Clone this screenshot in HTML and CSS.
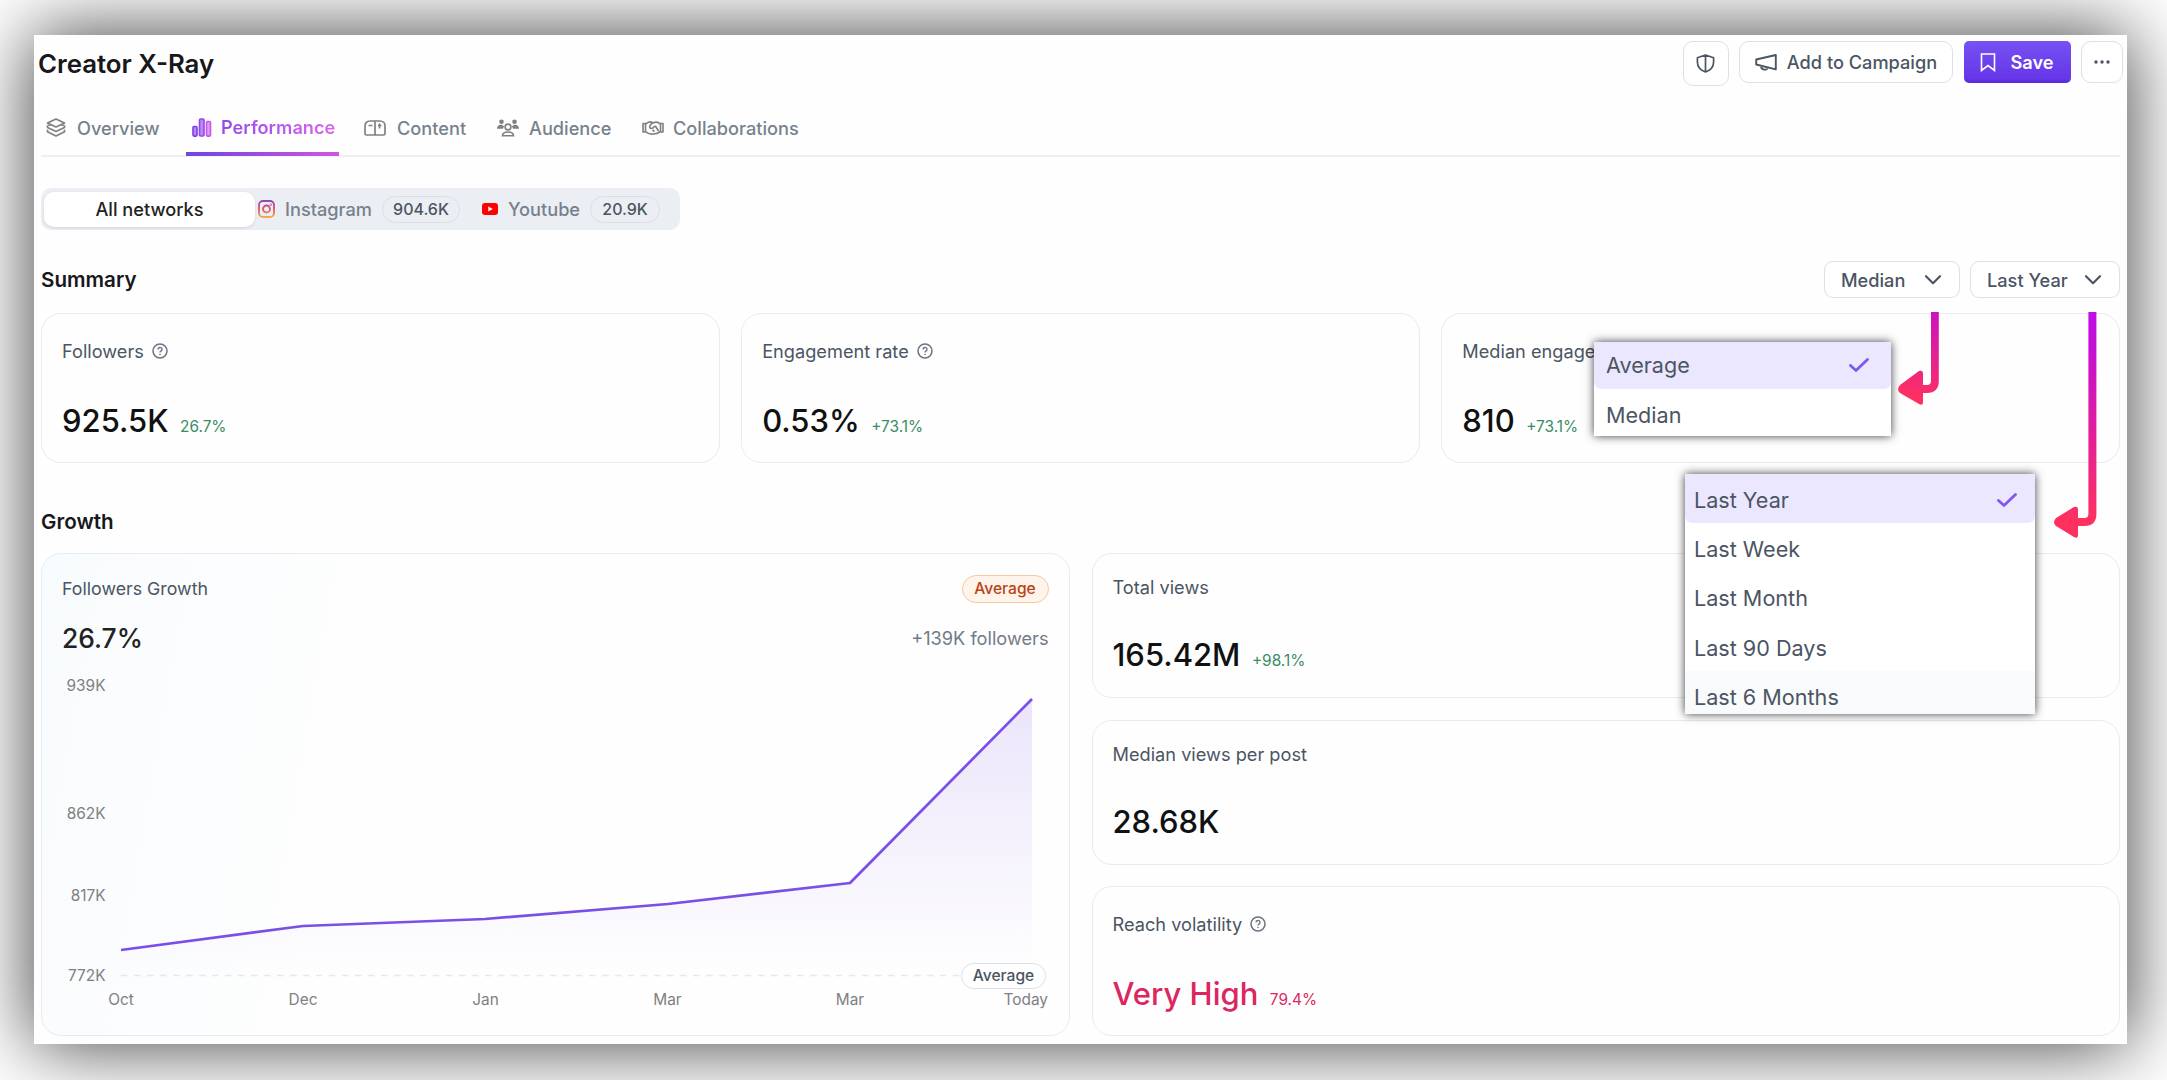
FILE: index.html
```html
<!DOCTYPE html>
<html lang="en">
<head>
  <meta charset="utf-8">
  <title>Creator X-Ray</title>
  <link rel="stylesheet" href="styles.css">
</head>
<body>

  <svg class="defs" width="0" height="0">
    <defs>
      <symbol id="help" viewBox="0 0 16 16">
        <circle cx="8" cy="8" r="7" fill="none" stroke="currentColor" stroke-width="1.5"/>
        <path d="M6 6.4a2 2 0 1 1 2.9 1.8c-.6.3-.9.6-.9 1.2" fill="none" stroke="currentColor" stroke-width="1.4"/>
        <circle cx="8" cy="11.5" r=".8" fill="currentColor"/>
      </symbol>
      <symbol id="chevron" viewBox="0 0 16 10">
        <path d="M1 1.2l7 7 7-7" fill="none" stroke="currentColor" stroke-width="2.2" stroke-linecap="round" stroke-linejoin="round"/>
      </symbol>
      <symbol id="check" viewBox="0 0 20 14">
        <path d="M1.500 7.500l5.500 5L18.500 1.500" fill="none" stroke="currentColor" stroke-width="2.800" stroke-linecap="round" stroke-linejoin="round"/>
      </symbol>
    </defs>
  </svg>

  <main class="panel">
    <header class="header">
      <h1>Creator X-Ray</h1>
      <div class="actions">
        <button class="btn shield">
          <svg width="19" height="19" viewBox="0 0 19 19" fill="none" stroke="currentColor" stroke-width="1.7" stroke-linejoin="round"><path d="M9.5 1L17.6 3.8V8c0 4.600-3.200 8.200-8.100 10C4.600 16.200 1.400 12.600 1.400 8V3.800zM9.500 1v17"/></svg>
        </button>
        <button class="btn campaign">
          <svg width="22" height="17" viewBox="0 0 22 17" fill="none" stroke="currentColor" stroke-width="1.9" stroke-linejoin="round"><path d="M1.200 5.500L20.800 1v14.400L1.200 10.500zM6 12c0 4 6 5 6.500 1.500"/></svg>
          Add to Campaign
        </button>
        <button class="btn save">
          <svg width="16" height="19" viewBox="0 0 16 19" fill="none" stroke="currentColor" stroke-width="1.600"><path d="M1.500 1h13v16.500L8 12.500l-6.500 5z"/></svg>
          Save
        </button>
        <button class="btn more">
          <svg width="16" height="4" viewBox="0 0 16 4" fill="currentColor"><circle cx="2" cy="2" r="1.700"/><circle cx="8" cy="2" r="1.700"/><circle cx="14" cy="2" r="1.700"/></svg>
        </button>
      </div>
    </header>

    <nav class="tabs">
      <a class="tab overview">
        <svg width="20" height="19" viewBox="0 0 20 19" fill="none" stroke="currentColor" stroke-width="1.700" stroke-linejoin="round"><path d="M10 1l8.500 4L10 9 1.500 5zM1.500 7.500v2L10 13.500l8.500-4v-2M1.500 11.800v2L10 18l8.500-4.200v-2M1.500 7.500L5 6.600M18.500 7.500L15 6.600"/></svg>
        <span>Overview</span>
      </a>
      <a class="tab performance active">
        <svg width="20" height="19" viewBox="0 0 20 19" stroke-width="1.600"><g fill="#b58af5" stroke="#7c3fe8"><rect x="1" y="8.500" width="4" height="9.600" rx="1"/><rect x="7.500" y="1" width="4.500" height="17" rx="1" stroke="#9a45ea"/><rect x="14.500" y="3.500" width="4" height="14.600" rx="1" fill="#e49af5" stroke="#c458ee"/></g></svg>
        <span>Performance</span>
      </a>
      <a class="tab content">
        <svg width="22" height="16" viewBox="0 0 22 16" fill="none" stroke="currentColor" stroke-width="1.700" stroke-linejoin="round"><path d="M6 1h10c3 0 5 2.200 5 5v7.500a1.500 1.500 0 0 1-1.500 1.500h-17A1.500 1.500 0 0 1 1 13.500V6c0-2.800 2-5 5-5zM11 1v14M4.500 5.500h4M14 5.500h3.500M15.500 3.500v5"/></svg>
        <span>Content</span>
      </a>
      <a class="tab audience">
        <svg width="22" height="18" viewBox="0 0 22 18" fill="currentColor"><circle cx="4.500" cy="2.800" r="2.300"/><circle cx="17.500" cy="2.800" r="2.300"/><path d="M0 9.800c0-5 5.500-4.800 7-2.500L6 9.800zM22 9.800c0-5-5.500-4.800-7-2.500l1 2.500z"/><g fill="none" stroke="currentColor" stroke-width="1.600"><circle cx="11" cy="8" r="2.900"/><path d="M5.500 16.800c0-5 11-5 11 0z"/></g></svg>
        <span>Audience</span>
      </a>
      <a class="tab collab">
        <svg width="22" height="14" viewBox="0 0 22 14" fill="none" stroke="currentColor" stroke-width="1.600" stroke-linejoin="round"><path d="M1 2.500h2.500v8.500H1zM21 2.500h-2.500v8.500H21zM3.500 3.500c2.500-3 5.500-3 7.500-1.500 3-1.500 5.500-1 7.500 1.200M11 2C7.500 3 6.500 7.500 9.500 7.500c2 0 2-2.200 4-2.200L16.500 10M3.500 10.500c2 2 5 3 8 2.500 3 0 5-1 7-2.500M12.500 10.500L10.500 9"/></svg>
        <span>Collaborations</span>
      </a>
    </nav>

    <div class="networks">
      <div class="network all">All networks</div>
      <div class="network instagram">
        <svg width="17" height="18" viewBox="0 0 17 18" fill="none" stroke="url(#ig)" stroke-width="1.800">
          <defs><linearGradient id="ig" x1="0" y1="0" x2="0" y2="18" gradientUnits="userSpaceOnUse"><stop offset="0" stop-color="#8a45b8"/><stop offset=".5" stop-color="#e0506b"/><stop offset="1" stop-color="#f9b24e"/></linearGradient></defs>
          <rect x="1" y="1" width="15" height="16" rx="4"/><circle cx="8.500" cy="9" r="3.500"/><circle cx="12.700" cy="4.700" r=".3"/>
        </svg>
        <span>Instagram</span>
        <b class="count">904.6K</b>
      </div>
      <div class="network youtube">
        <svg width="16" height="12" viewBox="0 0 16 12"><rect width="16" height="12" rx="3" fill="#f00"/><path d="M6.300 3.500l4.500 2.500-4.500 2.500z" fill="#fff"/></svg>
        <span>Youtube</span>
        <b class="count">20.9K</b>
      </div>
    </div>

    <div class="section-head">
      <h2>Summary</h2>
      <div class="filters">
        <div class="select median"><span>Median</span><svg width="16" height="10"><use href="#chevron"/></svg></div>
        <div class="select year"><span>Last Year</span><svg width="16" height="10"><use href="#chevron"/></svg></div>
      </div>
    </div>

    <section class="summary">
      <div class="card">
        <div class="label">Followers <svg class="help"><use href="#help"/></svg></div>
        <div class="value"><strong>925.5K</strong><small>26.7%</small></div>
      </div>
      <div class="card">
        <div class="label">Engagement rate <svg class="help"><use href="#help"/></svg></div>
        <div class="value"><strong>0.53%</strong><small>+73.1%</small></div>
      </div>
      <div class="card">
        <div class="label">Median engage</div>
        <div class="value"><strong>810</strong><small>+73.1%</small></div>
      </div>
    </section>

    <h2 class="growth-title">Growth</h2>

    <section class="growth">
      <div class="card growth-card">
        <div class="row">
          <span class="name">Followers Growth</span>
          <span class="tag">Average</span>
        </div>
        <div class="row second">
          <strong class="percent">26.7%</strong>
          <span class="delta">+139K followers</span>
        </div>
        <div class="chart">
          <svg width="1000" height="350" viewBox="55 670 1000 350">
            <defs>
              <linearGradient id="area" x1="0" y1="699" x2="0" y2="975" gradientUnits="userSpaceOnUse">
                <stop offset="0" stop-color="#7847e8" stop-opacity=".14"/>
                <stop offset="1" stop-color="#7847e8" stop-opacity="0"/>
              </linearGradient>
            </defs>
            <path d="M121 950L303 926L485 919L668 904L850 883L1032 699V975H121z" fill="url(#area)"/>
            <path d="M121 975.500H962" stroke="#e6e8eb" stroke-width="1.500" stroke-dasharray="6.500 6.500"/>
            <path d="M121 950L303 926L485 919L668 904L850 883L1032 699" fill="none" stroke="#7a4fe6" stroke-width="2.700" stroke-linejoin="round"/>
            <g class="axis" text-anchor="end">
              <text x="105.500" y="691">939K</text>
              <text x="105.500" y="818.500">862K</text>
              <text x="105.500" y="900.500">817K</text>
              <text x="105.500" y="981">772K</text>
              <text x="1048" y="1004.500">Today</text>
            </g>
            <g class="axis" text-anchor="middle">
              <text x="121" y="1004.500">Oct</text>
              <text x="303" y="1004.500">Dec</text>
              <text x="485.500" y="1004.500">Jan</text>
              <text x="667.500" y="1004.500">Mar</text>
              <text x="850" y="1004.500">Mar</text>
            </g>
          </svg>
          <span class="marker">Average</span>
        </div>
      </div>

      <div class="card">
        <div class="label">Total views</div>
        <div class="value"><strong>165.42M</strong><small>+98.1%</small></div>
      </div>
      <div class="card">
        <div class="label">Median views per post</div>
        <div class="value"><strong>28.68K</strong></div>
      </div>
      <div class="card volatility">
        <div class="label">Reach volatility <svg class="help"><use href="#help"/></svg></div>
        <div class="value danger"><strong>Very High</strong><small>79.4%</small></div>
      </div>
    </section>
  </main>

  <!-- open menus -->
  <ul class="menu menu-median">
    <li class="selected">Average <svg width="20" height="14"><use href="#check"/></svg></li>
    <li>Median</li>
  </ul>
  <ul class="menu menu-year">
    <li class="selected">Last Year <svg width="20" height="14"><use href="#check"/></svg></li>
    <li>Last Week</li>
    <li>Last Month</li>
    <li>Last 90 Days</li>
    <li class="hover">Last 6 Months</li>
  </ul>

  <svg class="arrows" width="210" height="236" viewBox="1893 308 210 236">
    <defs>
      <linearGradient id="a1" x1="1939" y1="312" x2="1915" y2="400" gradientUnits="userSpaceOnUse"><stop offset="0" stop-color="#cb12bf"/><stop offset="1" stop-color="#ff3060"/></linearGradient>
      <linearGradient id="a2" x1="0" y1="312" x2="0" y2="520" gradientUnits="userSpaceOnUse"><stop offset="0" stop-color="#bf0de6"/><stop offset=".2" stop-color="#c60fd0"/><stop offset="1" stop-color="#ff3060"/></linearGradient>
    </defs>
    <path d="M1931 312h7.800v69q0 12-12 12H1923v8.500q0 5-4 2.500L1900 393q-4-3.500 0-8l19-14q4-1.500 4 3v11h4q4 0 4-4z" fill="url(#a1)"/>
    <path d="M2088.400 312h8v202q0 12-12 12H2078v8.500q0 5-4 2.500L2056 526q-4-3.500 0-8l18-11q4-1.500 4 3v8h6.400q4 0 4-4z" fill="url(#a2)"/>
  </svg>

</body>
</html>
```
FILE: styles.css
```css
* {
  box-sizing: border-box;
}
body {
  margin: 0;
  width: 2167px;
  height: 1080px;
  padding: 35px 40px 36px 34px;
  overflow: hidden;
  background: #fff;
  color: #4b5563;
  font-family: Inter, "Liberation Sans", sans-serif;
  font-size: 18.2px;
}
h1, h2, ul {
  margin: 0;
  padding: 0;
}
.defs {
  position: absolute;
}
.panel {
  height: 1009px;
  background: #fefefe;
  border: 1px solid #fff;
  box-shadow: 0 0 72px 2px rgba(0, 0, 0, .74);
}

/* header */
.header {
  display: flex;
  justify-content: space-between;
  height: 56px;
  padding: 5px 3px 0 3px;
}
h1 {
  font-size: 25.8px;
  font-weight: 600;
  line-height: 45px;
  color: #18181b;
}
.actions {
  display: flex;
  align-items: flex-start;
  gap: 10.5px;
}
.btn {
  display: flex;
  align-items: center;
  justify-content: center;
  height: 42px;
  padding: 0;
  font: 500 18.2px Inter, sans-serif;
  color: #4b5563;
  background: #fff;
  border: 1.5px solid #dce0e8;
  border-radius: 10px;
}
.shield {
  width: 46px;
  height: 45px;
}
.campaign {
  width: 214px;
  gap: 10px;
}
.save {
  width: 107px;
  gap: 14px;
  font-weight: 600;
  color: #fff;
  background: linear-gradient(#7652f3, #6636e8 90%, #552bcf);
  border: none;
  border-radius: 5px;
}
.more {
  width: 42px;
}

/* tabs */
.tabs {
  display: flex;
  height: 65px;
  margin: 0 6px;
  border-bottom: 2px solid #edf0f4;
}
.tab {
  display: flex;
  align-items: center;
  height: 64px;
  padding-top: 7px;
  font-weight: 500;
  color: #77818d;
}
.tab svg {
  flex: none;
  color: #808080;
}
.overview { width: 145px; padding-left: 5px; gap: 11px; }
.content { padding-left: 25px; gap: 11px; width: 158px; }
.audience { gap: 10px; width: 145px; }
.collab { gap: 9px; }
.performance {
  width: 153px;
  padding: 10px 0 0 6px;
  gap: 9px;
  border-bottom: 4px solid;
  border-image: linear-gradient(90deg, #6f45e0, #cf57df) 1;
}
.performance span {
  font-weight: 600;
  background: linear-gradient(90deg, #9449ec, #d964ee);
  -webkit-background-clip: text;
  color: transparent;
}

/* networks */
.networks {
  display: flex;
  align-items: center;
  width: 639px;
  height: 42px;
  margin: 31px 0 0 6px;
  padding-left: 3px;
  background: #ebeff3;
  border-radius: 10px;
  font-weight: 500;
  color: #77818d;
}
.network {
  display: flex;
  align-items: center;
  gap: 10px;
}
.all {
  justify-content: center;
  width: 211px;
  height: 35px;
  background: #fff;
  border-radius: 10px;
  color: #222;
  box-shadow: 0 1px 3px rgba(30, 40, 60, .13);
}
.instagram {
  width: 224px;
  padding-left: 3px;
}
.youtube {
  padding-left: 3px;
}
.count {
  display: flex;
  align-items: center;
  justify-content: center;
  width: 78px;
  height: 27px;
  border: 1.5px solid #d9dfe9;
  border-radius: 14px;
  font-size: 16px;
  font-weight: 500;
  color: #4b5563;
}
.youtube .count {
  width: 70px;
}

/* section headings */
.section-head {
  display: flex;
  justify-content: space-between;
  align-items: center;
  height: 37px;
  margin: 31px 6px 0;
}
h2 {
  font-size: 20.600px;
  font-weight: 600;
  line-height: 30px;
  color: #18181b;
}
.filters {
  display: flex;
  gap: 10px;
}
.select {
  display: flex;
  align-items: center;
  justify-content: space-between;
  height: 37px;
  padding: 0 18px 0 16px;
  background: #fff;
  border: 1.5px solid #dce1e8;
  border-radius: 9px;
  font-weight: 500;
}
.median { width: 136px; }
.year { width: 150px; }

/* cards */
.summary {
  display: grid;
  grid-template-columns: repeat(3, 1fr);
  grid-template-rows: 150px;
  gap: 21.5px;
  height: 150px;
  margin: 15px 6px 0;
}
.card {
  min-width: 0;
  padding: 21px 20px 0;
  background: #fefefe;
  border: 1.5px solid #e8ebf1;
  border-radius: 20px;
}
.summary .card,
.volatility {
  padding-top: 25px;
}
.label {
  display: flex;
  align-items: center;
  gap: 8px;
  line-height: 24px;
  white-space: nowrap;
}
.help {
  width: 16px;
  height: 16px;
  color: #6b7280;
}
.value {
  display: flex;
  align-items: baseline;
  gap: 11.5px;
  margin-top: 36px;
  line-height: 40px;
}
.summary .value,
.volatility .value {
  margin-top: 38px;
}
.value strong {
  font-size: 31px;
  font-weight: 500;
  color: #111;
}
.value small {
  font-size: 15.4px;
  line-height: 20px;
  color: #3b8d63;
}
.value.danger strong,
.value.danger small {
  color: #dd2560;
}
.growth-title {
  margin: 44px 6px 0;
}
.growth {
  display: grid;
  grid-template-columns: 1fr 1fr;
  grid-template-rows: 145px 145px 149.5px;
  gap: 21.5px 22px;
  margin: 16px 6px 0;
}
.growth-card {
  grid-row: span 3;
  background: linear-gradient(100deg, #f8fbfd, #fefefe 32%);
}
.row {
  display: flex;
  align-items: center;
  justify-content: space-between;
  height: 27px;
}
.name {
  font-size: 17.8px;
}
.tag {
  width: 87px;
  height: 28px;
  line-height: 25px;
  text-align: center;
  font-size: 15.600px;
  font-weight: 500;
  color: #b9421c;
  background: #fff4ea;
  border: 1.5px solid #f8c8a4;
  border-radius: 14px;
}
.second {
  margin-top: 22px;
}
.percent {
  font-size: 26.4px;
  font-weight: 500;
  color: #222;
}
.delta {
  color: #717b87;
}
.chart {
  position: relative;
  margin: 19px 0 0 -7px;
}
.chart svg {
  display: block;
}
.axis text {
  font-size: 15.4px;
  fill: #808080;
}
.marker {
  position: absolute;
  left: 906px;
  top: 293px;
  width: 85px;
  height: 26px;
  line-height: 23px;
  text-align: center;
  font-size: 15.6px;
  font-weight: 500;
  background: #fff;
  border: 1.5px solid #dde1e7;
  border-radius: 13px;
}

/* menus */
.menu {
  position: absolute;
  list-style: none;
  overflow: hidden;
  background: #fff;
  box-shadow: 0 0 9px rgba(0, 0, 0, .75);
  font-size: 21.6px;
}
.menu li {
  display: flex;
  align-items: center;
  justify-content: space-between;
  height: 49.3px;
  padding: 2px 0 0 9px;
}
.menu .selected {
  background: #ebe7fe;
  border-radius: 0 0 7px 7px;
}
.menu svg {
  color: #8257ee;
}
.menu-median {
  left: 1594px;
  top: 342px;
  width: 297px;
  height: 94px;
}
.menu-median li {
  padding: 2px 22px 0 12px;
}
.menu-median .selected {
  height: 47px;
  padding-bottom: 4px;
}
.menu-year {
  left: 1685px;
  top: 474px;
  width: 350px;
  height: 240px;
}
.menu-year .selected {
  padding-right: 18px;
}
.menu-year .hover {
  background: #f8fafc;
}
.arrows {
  position: absolute;
  left: 1893px;
  top: 308px;
}
```
